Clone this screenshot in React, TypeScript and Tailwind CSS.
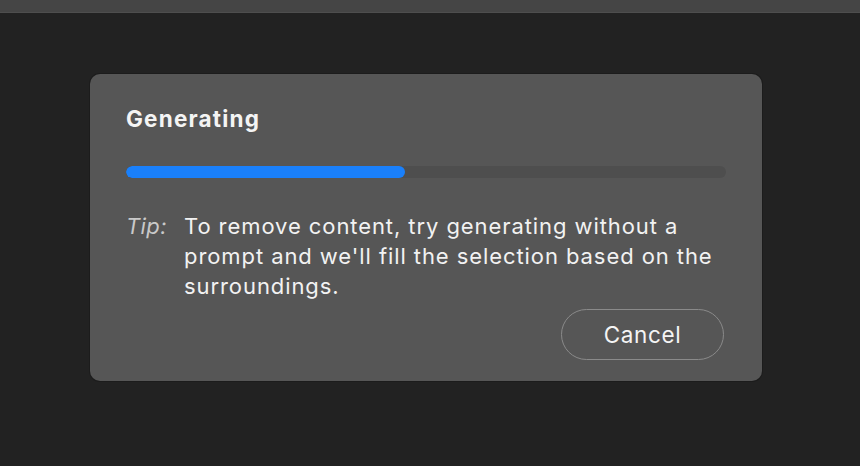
export default function App() {
  const progress = 46.5;
  return (
    <div className="w-[860px] h-[466px] bg-[#222222] flex flex-col" style={{ fontFamily: "Inter, 'Noto Sans', sans-serif" }}>
      <div className="h-[13px] bg-[#454545] border-b border-[#4e4e4e]" />
      <div className="pl-[90px] pt-[61px]">
        <div className="w-[672px] h-[307px] rounded-[10px] bg-[#565656] px-[36px] pt-[31px] flex flex-col shadow-[0_0_0_1px_#1c1c1c]">
          <div className="h-[28px] leading-[28px] text-[22.5px] font-bold text-[#f4f4f4] tracking-[1.2px]">Generating</div>
          <div className="h-[12px] mt-[33px] rounded-full bg-[#4e4e4e] overflow-hidden">
            <div className="h-full rounded-full bg-[#1a80fb]" style={{ width: `${progress}%` }} />
          </div>
          <div className="flex mt-[33px] text-[22px] leading-[30px] text-[#f2f2f2] tracking-[0.92px]">
            <span className="w-[58px] shrink-0 italic text-[#c9c9c9] tracking-[0.4px]">Tip:</span>
            <p className="w-[545px]">
              To remove content, try generating without a prompt and we'll fill the selection based on the surroundings.
            </p>
          </div>
          <div className="flex justify-end mt-[8px]">
            <button className="w-[163px] h-[51px] rounded-full border-[1.5px] border-[#8a8a8a] text-[22.5px] text-[#f4f4f4] tracking-[0.6px] mr-[2px]">
              Cancel
            </button>
          </div>
        </div>
      </div>
    </div>
  );
}
